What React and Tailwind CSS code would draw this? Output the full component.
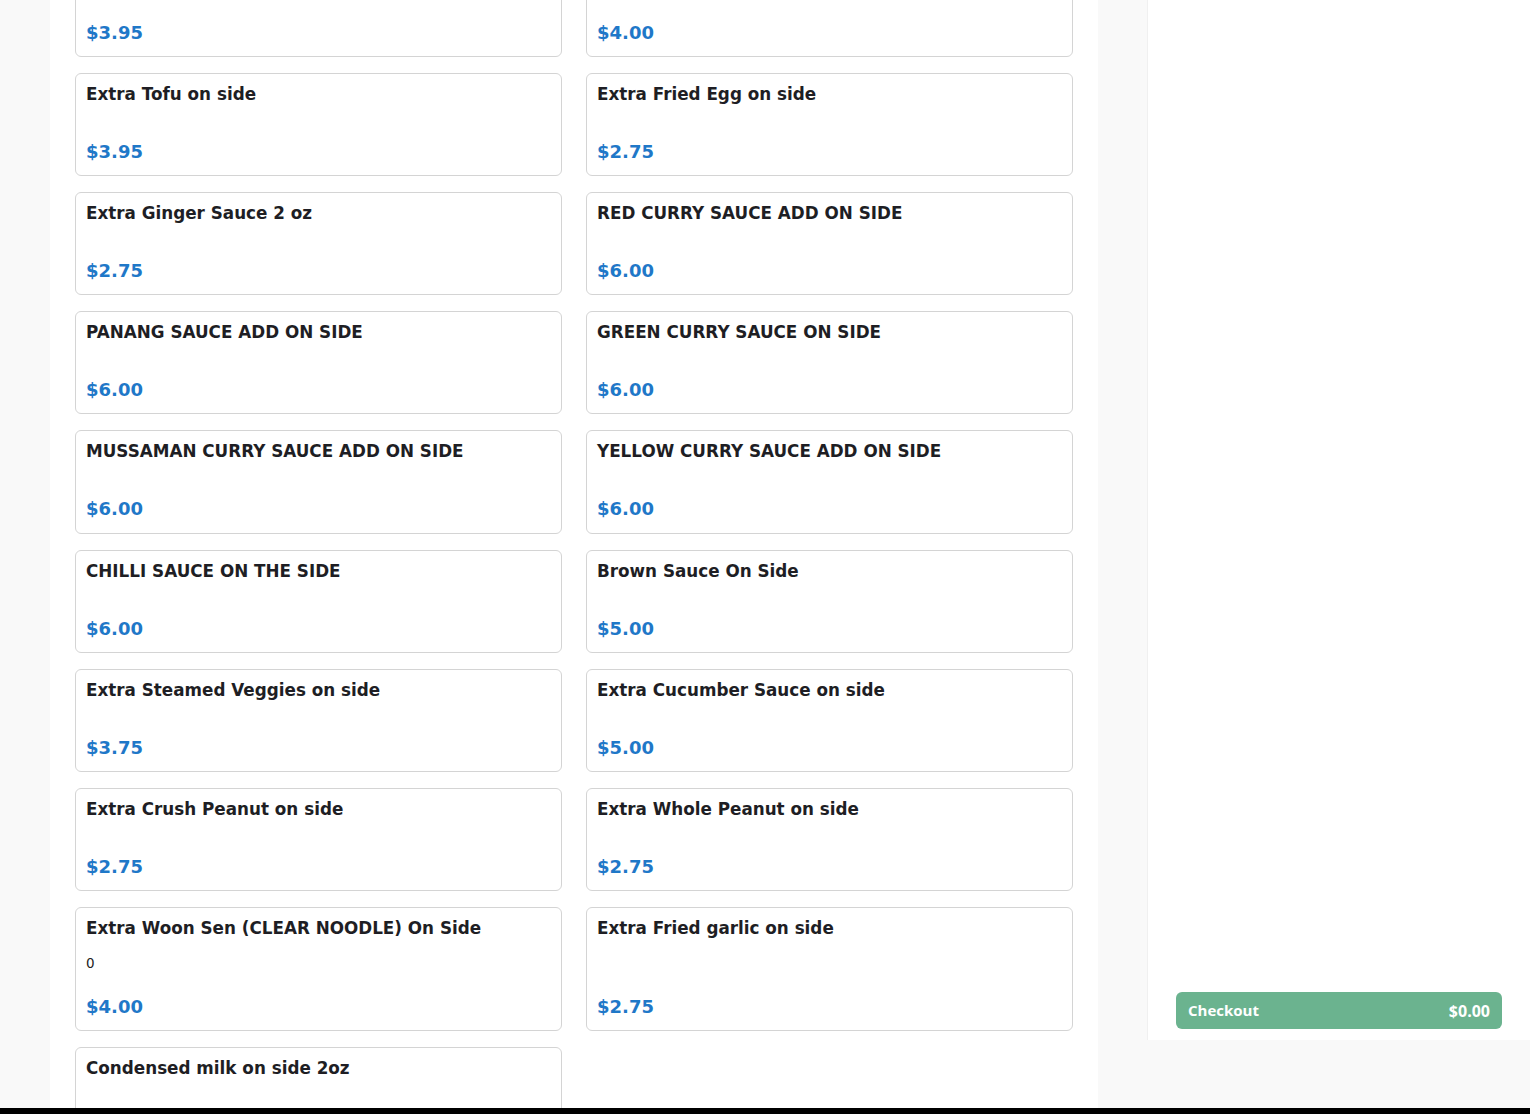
const items = [
  { name: "Extra Tofu", price: "$3.95" },
  { name: "Extra Chicken", price: "$4.00" },
  { name: "Extra Tofu on side", price: "$3.95" },
  { name: "Extra Fried Egg on side", price: "$2.75" },
  { name: "Extra Ginger Sauce 2 oz", price: "$2.75" },
  { name: "RED CURRY SAUCE ADD ON SIDE", price: "$6.00" },
  { name: "PANANG SAUCE ADD ON SIDE", price: "$6.00" },
  { name: "GREEN CURRY SAUCE ON SIDE", price: "$6.00" },
  { name: "MUSSAMAN CURRY SAUCE ADD ON SIDE", price: "$6.00" },
  { name: "YELLOW CURRY SAUCE ADD ON SIDE", price: "$6.00" },
  { name: "CHILLI SAUCE ON THE SIDE", price: "$6.00" },
  { name: "Brown Sauce On Side", price: "$5.00" },
  { name: "Extra Steamed Veggies on side", price: "$3.75" },
  { name: "Extra Cucumber Sauce on side", price: "$5.00" },
  { name: "Extra Crush Peanut on side", price: "$2.75" },
  { name: "Extra Whole Peanut on side", price: "$2.75" },
  { name: "Extra Woon Sen (CLEAR NOODLE) On Side", desc: "0", price: "$4.00" },
  { name: "Extra Fried garlic on side", price: "$2.75" },
  { name: "Condensed milk on side 2oz", price: "$2.00" },
];

function ItemCard({ item }) {
  return (
    <div className="flex flex-col rounded-md border border-[#d4d4d4] bg-white px-[10px] pt-[10px] pb-[11.15px]">
      <div className="text-[16.8px] leading-[20px] font-bold text-[#1e1e24]">{item.name}</div>
      <div className="mt-[15px] mb-[21px] flex-1 text-[13.5px] leading-[21px] text-[#222]">
        {item.desc}
      </div>
      <div className="text-[18px] leading-[24px] font-bold text-[#1f78c8]">{item.price}</div>
    </div>
  );
}

export default function App() {
  return (
    <div
      className="flex h-[1114px] flex-col overflow-hidden bg-[#f9f9f9]"
      style={{ fontFamily: '"DejaVu Sans", sans-serif' }}
    >
      <div className="flex min-h-0 flex-1 items-start">
        <div className="ml-[50px] w-[1048px] self-stretch bg-white px-[25px]">
          <div className="-mt-[46.15px] grid grid-cols-2 gap-x-[24px] gap-y-[16px]">
            {items.map((item, i) => (
              <ItemCard key={i} item={item} />
            ))}
          </div>
        </div>
        <div className="ml-[49px] flex h-[1040px] flex-1 flex-col justify-end border-l border-[#f0f0f0] bg-white pr-[28px] pb-[11px] pl-[28px]">
          <button
            type="button"
            className="flex h-[37px] items-center justify-between rounded-md bg-[#6bb38f] px-[12px] text-[15px] font-bold text-white"
            style={{ fontFamily: '"Open Sans", sans-serif' }}
          >
            <span>Checkout</span>
            <span className="text-[16px]">$0.00</span>
          </button>
        </div>
      </div>
      <div className="h-[6px] bg-black" />
    </div>
  );
}
